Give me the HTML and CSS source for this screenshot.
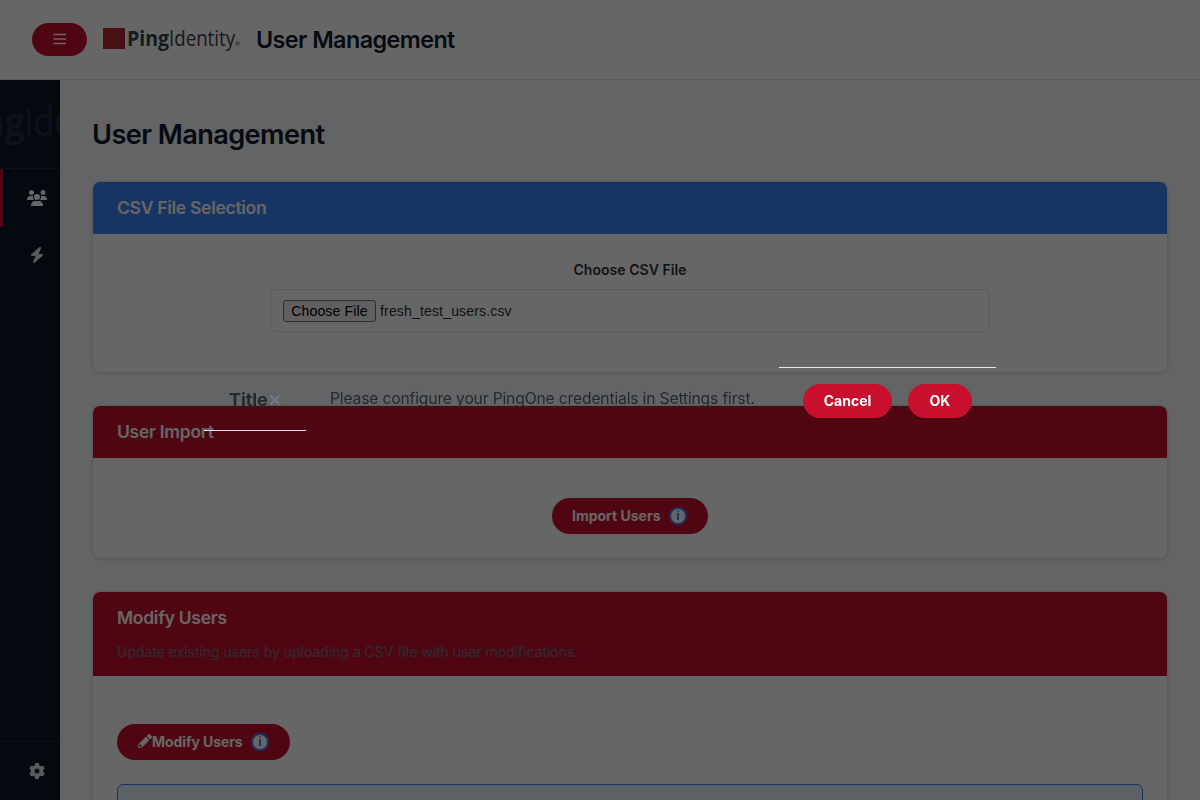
FILE: index.html
```html
<!DOCTYPE html>
<html lang="en">
<head>
<meta charset="utf-8">
<title>User Management</title>
<link rel="stylesheet" href="styles.css">
</head>
<body>
<header class="topbar">
  <button class="menu-btn" aria-label="Menu"><svg width="14" height="12" viewBox="0 0 14 12"><path d="M.5 1.500h12.500M.5 6h12.500M.5 10.500h12.500" stroke="currentColor" stroke-width="1.500"/></svg></button>
  <svg class="logo" width="138" height="32" viewBox="0 0 138 32">
    <rect y="4" width="22" height="21" fill="#b3282d"/>
    <text class="logo-bold" x="24" y="22" textLength="42" lengthAdjust="spacingAndGlyphs">Ping</text>
    <text class="logo-light" x="66" y="22" textLength="66" lengthAdjust="spacingAndGlyphs">Identity</text>
    <text class="logo-mark" x="132" y="22">®</text>
  </svg>
  <span class="topbar-title">User Management</span>
</header>
<div class="shell">
  <nav class="sidebar">
    <div class="sidebar-logo">
      <svg width="60" height="60" viewBox="0 0 60 60">
        <text class="ghost-bold" x="-53" y="44" textLength="78" lengthAdjust="spacingAndGlyphs">Ping</text>
        <text class="ghost-light" x="24" y="44" textLength="120" lengthAdjust="spacingAndGlyphs">Identity</text>
      </svg>
    </div>
    <a class="nav-item active"><svg width="20" height="16" viewBox="0 0 640 512"><path d="M144 0a80 80 0 1 1 0 160A80 80 0 1 1 144 0zM512 0a80 80 0 1 1 0 160A80 80 0 1 1 512 0zM0 298.700C0 239.800 47.800 192 106.700 192h42.700c15.900 0 31 3.500 44.600 9.700c-1.300 7.200-1.900 14.700-1.900 22.300c0 38.200 16.800 72.500 43.300 96H21.300C9.600 320 0 310.400 0 298.700zM405.300 320c26.600-23.500 43.300-57.800 43.300-96c0-7.600-.7-15-1.900-22.300c13.600-6.300 28.700-9.700 44.600-9.700h42.700C592.200 192 640 239.800 640 298.700c0 11.800-9.600 21.300-21.300 21.300H405.300zM224 224a96 96 0 1 1 192 0 96 96 0 1 1 -192 0zM128 485.300C128 411.700 187.700 352 261.300 352H378.700C452.300 352 512 411.700 512 485.300c0 14.700-11.900 26.700-26.700 26.700H154.700c-14.700 0-26.700-11.900-26.700-26.700z"/></svg></a>
    <a class="nav-item"><svg width="14" height="16" viewBox="0 0 448 512"><path d="M349.400 44.600c5.900-13.700 1.500-29.700-10.600-38.500s-28.600-8-39.900 1.800l-256 224c-10 8.800-13.600 22.900-8.900 35.300S50.700 288 64 288H175.500L98.600 467.400c-5.900 13.700-1.500 29.700 10.600 38.500s28.600 8 39.900-1.800l256-224c10-8.800 13.600-22.900 8.900-35.300s-16.600-20.700-30-20.700H272.500L349.400 44.600z"/></svg></a>
    <a class="nav-item nav-bottom"><svg width="16" height="16" viewBox="0 0 512 512"><path d="M495.900 166.600c3.200 8.700 .5 18.400-6.400 24.600l-43.300 39.400c1.100 8.300 1.700 16.800 1.700 25.400s-.6 17.100-1.700 25.400l43.300 39.400c6.900 6.200 9.600 15.900 6.400 24.600c-4.400 11.900-9.700 23.300-15.800 34.300l-4.700 8.100c-6.600 11-14 21.400-22.100 31.200c-5.900 7.200-15.700 9.600-24.500 6.800l-55.700-17.700c-13.400 10.300-28.200 18.900-44 25.400l-12.500 57.100c-2 9.100-9 16.300-18.200 17.800c-13.800 2.300-28 3.500-42.500 3.500s-28.700-1.200-42.500-3.500c-9.200-1.500-16.200-8.700-18.200-17.800l-12.500-57.100c-15.800-6.500-30.600-15.100-44-25.400L83.100 425.900c-8.800 2.800-18.600 .3-24.500-6.800c-8.100-9.800-15.500-20.200-22.100-31.200l-4.700-8.100c-6.100-11-11.400-22.400-15.800-34.300c-3.200-8.700-.5-18.400 6.400-24.600l43.300-39.400C64.600 273.100 64 264.600 64 256s.6-17.100 1.700-25.400L22.400 191.200c-6.900-6.200-9.600-15.900-6.400-24.600c4.400-11.900 9.700-23.300 15.800-34.300l4.700-8.100c6.600-11 14-21.400 22.100-31.200c5.900-7.200 15.700-9.600 24.500-6.800l55.700 17.700c13.400-10.300 28.200-18.900 44-25.400l12.500-57.100c2-9.100 9-16.300 18.200-17.800C227.300 1.200 241.500 0 256 0s28.700 1.200 42.500 3.500c9.200 1.500 16.200 8.700 18.200 17.800l12.500 57.100c15.800 6.500 30.600 15.100 44 25.400l55.700-17.700c8.800-2.800 18.600-.3 24.500 6.800c8.100 9.800 15.500 20.200 22.100 31.200l4.700 8.100c6.100 11 11.400 22.400 15.800 34.300zM256 336a80 80 0 1 0 0-160 80 80 0 1 0 0 160z"/></svg></a>
  </nav>
  <main class="content">
    <h1 class="page-title">User Management</h1>
    <section class="card">
      <div class="card-head blue"><h2>CSV File Selection</h2></div>
      <div class="card-body file-body">
        <label class="file-label">Choose CSV File</label>
        <div class="file-input"><span class="file-btn">Choose File</span><span class="file-name">fresh_test_users.csv</span></div>
      </div>
    </section>
    <section class="card">
      <div class="card-head"><h2>User Import</h2></div>
      <div class="card-body import-body">
        <button class="btn"><span class="import-label">Import Users</span><span class="info">i</span></button>
      </div>
    </section>
    <section class="card">
      <div class="card-head"><h2>Modify Users</h2><p class="card-desc">Update existing users by uploading a CSV file with user modifications.</p></div>
      <div class="card-body modify-body">
        <button class="btn"><svg class="pencil" width="14" height="14" viewBox="0 0 512 512"><path d="M497.900 142.100l-46.100 46.100c-4.700 4.700-12.300 4.700-17 0l-111-111c-4.700-4.700-4.700-12.300 0-17l46.100-46.100c18.700-18.700 49.100-18.700 67.900 0l60.100 60.100c18.800 18.700 18.800 49.100 0 67.900zM284.200 99.800L21.600 362.400.4 483.900c-2.900 16.400 11.400 30.600 27.800 27.800l121.500-21.300 262.600-262.600c4.700-4.700 4.700-12.300 0-17l-111-111c-4.800-4.700-12.400-4.700-17.100 0zM88 424h48v36.300l-64.500 11.300-31.100-31.100L51.700 376H88v48z"/></svg><span class="modify-label">Modify Users</span><span class="info">i</span></button>
        <div class="notice"></div>
      </div>
    </section>
  </main>
</div>
<div class="overlay">
  <div class="modal">
    <div class="modal-head"><span class="modal-title">Title</span><svg class="close" width="12" height="12" viewBox="0 0 12 12"><path d="M1.500 1.500l9 9M10.500 1.500l-9 9" stroke="currentColor" stroke-width="2"/></svg></div>
    <div class="modal-body">Please configure your PingOne credentials in Settings first.</div>
    <div class="modal-foot"><button class="btn cancel">Cancel</button><button class="btn ok">OK</button></div>
  </div>
</div>
</body>
</html>
```

FILE: styles.css
```css
* { box-sizing: border-box; }
body { margin: 0; height: 800px; overflow: hidden; background: #f8fafc; color: #2d3136; font-family: Inter, "Liberation Sans", sans-serif; }
button { border: 0; font-family: inherit; }
h1, h2, p { margin: 0; }
.topbar { height: 80px; display: flex; align-items: center; padding: 0 32px; background: #fff; border-bottom: 1px solid #e2e8f0; }
.menu-btn { width: 55px; height: 33px; border-radius: 17px; background: #c8102e; color: #fff; display: flex; align-items: center; justify-content: center; padding: 0 0 2px; }
.logo { margin-left: 16px; overflow: visible; }
.logo text, .sidebar-logo text { font-family: "Open Sans", sans-serif; }
.logo-bold { font-size: 22px; font-weight: 700; fill: #36454f; }
.logo-light { font-size: 22px; font-weight: 400; fill: #36454f; }
.logo-mark { font-size: 6px; fill: #36454f; }
.topbar-title { margin-left: 15px; font-size: 23.300px; font-weight: 600; color: #0f1c2e; letter-spacing: -.54px; }
.shell { display: flex; height: 720px; }
.sidebar { width: 60px; flex: none; display: flex; flex-direction: column; background: #0c172a; color: #fff; overflow: hidden; }
.sidebar-logo { height: 89px; padding-top: 12px; border-bottom: 1px solid #1e2a3b; }
.ghost-bold { font-size: 40px; font-weight: 700; fill: #212c3e; }
.ghost-light { font-size: 40px; font-weight: 400; fill: #212c3e; }
.nav-item { height: 57px; display: flex; align-items: center; justify-content: center; padding: 0 0 1px 14px; color: #dde2e8; }
.nav-item path { fill: currentColor; }
.nav-item.active { height: 58px; border-left: 3px solid #c8102e; padding: 0 0 0 11px; color: #fff; }
.nav-bottom { margin-top: auto; height: 59px; padding-bottom: 0; border-top: 1px solid #1e2a3b; }
.content { flex: 1; padding: 37px 32px 0; height: 720px; overflow: hidden; }
.page-title { font-size: 27.200px; line-height: 36px; font-weight: 600; color: #0f1c2e; letter-spacing: -.6px; margin-bottom: 28px; }
.card { background: #fff; border: 1px solid #e2e8f0; border-radius: 8px; overflow: hidden; margin-bottom: 32px; box-shadow: 0 1px 3px rgba(0,0,0,.1); }
.card-head { background: #c8102e; color: #fff; padding: 14px 24px; }
.card-head.blue { background: #3b82f6; }
.card-head h2 { font-size: 17.500px; line-height: 24px; font-weight: 600; letter-spacing: -.29px; }
.card-desc { font-size: 14.200px; line-height: 20px; margin-top: 12px; color: #6b7280; letter-spacing: -.12px; }
.file-body { height: 138px; padding-top: 26px; display: flex; flex-direction: column; align-items: center; }
.file-label { font-size: 14px; line-height: 20px; font-weight: 600; letter-spacing: .05px; }
.file-input { width: 720px; height: 43px; margin-top: 9px; padding: 0 12px; display: flex; align-items: center; border: 1px solid #e2e8f0; border-radius: 4px; font-family: "Liberation Sans", Arial, sans-serif; font-size: 14px; letter-spacing: .17px; }
.file-btn { width: 93px; height: 22px; line-height: 20px; text-align: center; border: 1px solid #767676; border-radius: 3px; background: #efefef; color: #000; }
.file-name { margin-left: 4px; }
.import-body { height: 100px; padding-top: 40px; display: flex; justify-content: center; }
.btn { height: 36px; border-radius: 18px; background: #c8102e; color: #fff; display: flex; align-items: center; padding: 0 20px; font-size: 14px; font-weight: 700; letter-spacing: 0; white-space: nowrap; }
.info { width: 18px; height: 18px; margin: 0 1px 0 8px; border: 2px solid #3b82f6; border-radius: 50%; background: #fff; color: #3b82f6; font-size: 12px; line-height: 14px; text-align: center; }
.import-label { width: 89px; text-align: left; padding-bottom: 1px; }
.pencil { fill: currentColor; margin: -2px 0 0 1px; }
.modify-label { width: 91px; text-align: left; padding-bottom: 1px; letter-spacing: -.08px; }
.modify-body { padding: 48px 24px; }
.notice { height: 90px; margin-top: 24px; background: #e7f3ff; border: 1px solid #3b82f6; border-radius: 6px; }
.overlay { position: fixed; inset: 0; background: rgba(0,0,0,.6); }
.modal { width: 792px; height: 64px; margin: 367px auto 0; display: flex; color: #25282c; }
.modal-head { width: 102px; height: 64px; padding: 2px 0 0 25px; display: flex; align-items: center; border-bottom: 1px solid #e2e8f0; }
.modal-title { width: 40px; font-size: 18px; font-weight: 700; letter-spacing: -.1px; }
.close { color: #6e7f90; opacity: .85; }
.modal-body { width: 473px; padding-left: 24px; font-size: 15.700px; line-height: 64px; letter-spacing: -.18px; white-space: nowrap; }
.modal-foot { width: 217px; padding: 16px 24px; display: flex; gap: 16px; border-top: 1px solid #e2e8f0; }
.modal-foot .btn { height: 34px; padding: 0 0 1px; justify-content: center; }
.cancel { width: 89px; }
.ok { width: 64px; }
```
